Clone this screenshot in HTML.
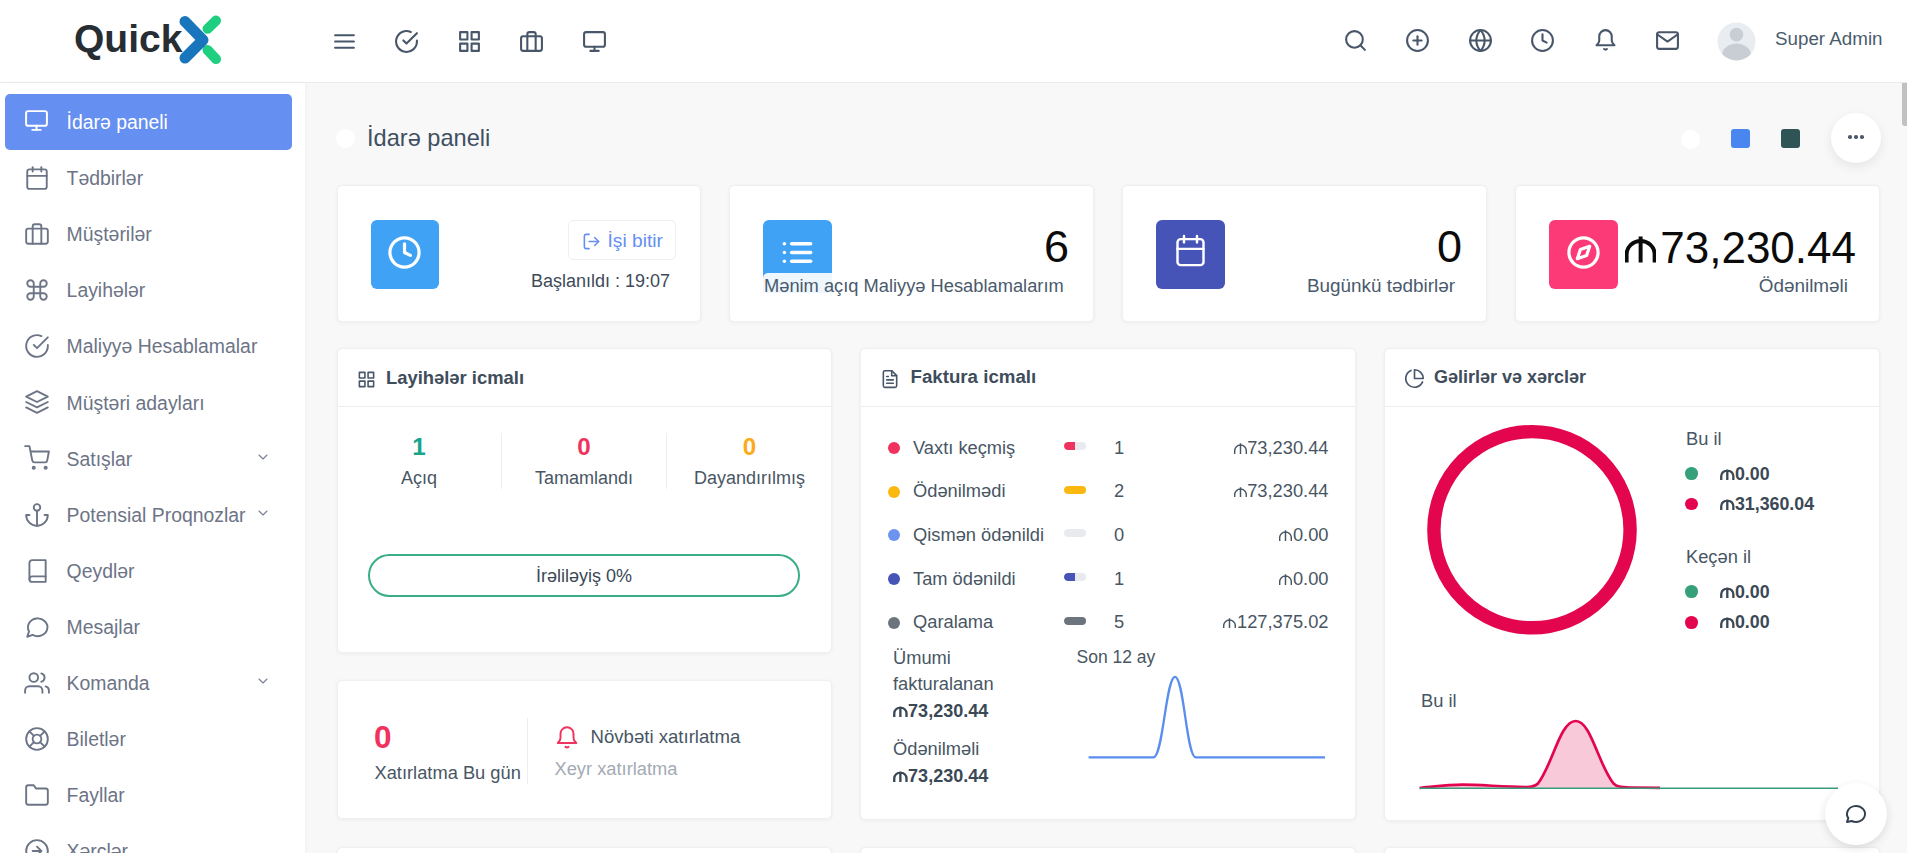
<!DOCTYPE html>
<html><head><meta charset="utf-8">
<style>
*{box-sizing:border-box;margin:0;padding:0}
html,body{width:1907px;height:853px;overflow:hidden;background:#f8f8f8;font-family:"Liberation Sans",sans-serif;}
.abs{position:absolute}
svg{display:block}
svg.mn{display:inline-block;vertical-align:baseline}
.ic{fill:none;stroke:currentColor;stroke-linecap:round;stroke-linejoin:round}
.t{position:absolute;white-space:nowrap}
#header{position:absolute;left:0;top:0;width:1907px;height:83px;background:#fff;border-bottom:1px solid #ebebeb;}
#sidebar{position:absolute;left:0;top:83px;width:305px;height:770px;background:#fff;box-shadow:1px 0 5px rgba(0,0,0,0.035)}
.card{position:absolute;background:#fff;border-radius:5px;box-shadow:0 1px 4px rgba(30,40,60,0.05);border:1px solid #eeeef3}
.hdr{position:absolute;left:0;right:0;top:0;height:58px;border-bottom:1px solid #ededf0}
</style></head><body>
<div id="header"></div>
<div class="t" style="left:74px;top:19px;font-size:39px;line-height:39px;font-weight:bold;color:#262d33">Quick</div>
<svg class="abs" style="left:176px;top:14px" width="48" height="52" viewBox="0 0 48 52">
  <path d="M31.5 14.8 L40 6.6" fill="none" stroke="#1fcf80" stroke-width="10" stroke-linecap="round"/>
  <path d="M31.5 36 L40 45" fill="none" stroke="#1fcf80" stroke-width="10" stroke-linecap="round"/>
  <path d="M9 7.5 L27 26 L9 44" fill="none" stroke="#1976bc" stroke-width="11" stroke-linecap="round" stroke-linejoin="round"/>
</svg>
<svg class="abs ic" style="left:332.0px;top:29px;color:#475669;" width="25" height="25" viewBox="0 0 24 24" stroke-width="2"><line x1="3" y1="6" x2="21" y2="6"/><line x1="3" y1="12" x2="21" y2="12"/><line x1="3" y1="18" x2="21" y2="18"/></svg>
<svg class="abs ic" style="left:393.9px;top:29px;color:#475669;" width="25" height="25" viewBox="0 0 24 24" stroke-width="2"><path d="M22 11.08V12a10 10 0 1 1-5.93-9.14"/><polyline points="22 4 12 14.01 9 11.01"/></svg>
<svg class="abs ic" style="left:457.0px;top:29px;color:#475669;" width="25" height="25" viewBox="0 0 24 24" stroke-width="2"><rect x="3" y="3" width="7" height="7"/><rect x="14" y="3" width="7" height="7"/><rect x="14" y="14" width="7" height="7"/><rect x="3" y="14" width="7" height="7"/></svg>
<svg class="abs ic" style="left:518.9px;top:29px;color:#475669;" width="25" height="25" viewBox="0 0 24 24" stroke-width="2"><rect x="2" y="7" width="20" height="14" rx="2" ry="2"/><path d="M16 21V5a2 2 0 0 0-2-2h-4a2 2 0 0 0-2 2v16"/></svg>
<svg class="abs ic" style="left:582.1px;top:29px;color:#475669;" width="25" height="25" viewBox="0 0 24 24" stroke-width="2"><rect x="2" y="3" width="20" height="14" rx="2" ry="2"/><line x1="8" y1="21" x2="16" y2="21"/><line x1="12" y1="17" x2="12" y2="21"/></svg>
<svg class="abs ic" style="left:1343.0px;top:28px;color:#475669;" width="25" height="25" viewBox="0 0 24 24" stroke-width="2"><circle cx="11" cy="11" r="8"/><line x1="21" y1="21" x2="16.65" y2="16.65"/></svg>
<svg class="abs ic" style="left:1405.1px;top:28px;color:#475669;" width="25" height="25" viewBox="0 0 24 24" stroke-width="2"><circle cx="12" cy="12" r="10"/><line x1="12" y1="8" x2="12" y2="16"/><line x1="8" y1="12" x2="16" y2="12"/></svg>
<svg class="abs ic" style="left:1468.0px;top:28px;color:#475669;" width="25" height="25" viewBox="0 0 24 24" stroke-width="2"><circle cx="12" cy="12" r="10"/><line x1="2" y1="12" x2="22" y2="12"/><path d="M12 2a15.3 15.3 0 0 1 4 10 15.3 15.3 0 0 1-4 10 15.3 15.3 0 0 1-4-10 15.3 15.3 0 0 1 4-10z"/></svg>
<svg class="abs ic" style="left:1530.0px;top:28px;color:#475669;" width="25" height="25" viewBox="0 0 24 24" stroke-width="2"><circle cx="12" cy="12" r="10"/><polyline points="12 6 12 12 16 14"/></svg>
<svg class="abs ic" style="left:1593.0px;top:28px;color:#475669;" width="25" height="25" viewBox="0 0 24 24" stroke-width="2"><path d="M12 2a6 6 0 0 0-6 6v4c0 2-1.2 3.4-2.6 4.6h17.2c-1.4-1.2-2.6-2.6-2.6-4.6V8A6 6 0 0 0 12 2z"/><path d="M10.6 20.2q1.4 1.1 2.8 0"/></svg>
<svg class="abs ic" style="left:1654.8px;top:28px;color:#475669;" width="25" height="25" viewBox="0 0 24 24" stroke-width="2"><path d="M4 4h16c1.1 0 2 .9 2 2v12c0 1.1-.9 2-2 2H4c-1.1 0-2-.9-2-2V6c0-1.1.9-2 2-2z"/><polyline points="22,6 12,13 2,6"/></svg>
<svg class="abs" style="left:1716.5px;top:21.5px" width="39" height="39" viewBox="0 0 39 39">
  <defs><clipPath id="avc"><circle cx="19.5" cy="19.5" r="19"/></clipPath></defs>
  <circle cx="19.5" cy="19.5" r="19" fill="#e9ecf0"/>
  <g clip-path="url(#avc)" fill="#c9ced5"><circle cx="19.5" cy="12.6" r="6.8"/><ellipse cx="19.5" cy="33.5" rx="14.5" ry="12"/></g>
</svg>
<div class="t" style="top:29.69px;font-size:18.8px;line-height:18.8px;color:#4a5b6d;left:1775px;">Super Admin</div>
<div id="sidebar"></div>
<div class="abs" style="left:5px;top:94.0px;width:287px;height:56px;border-radius:5px;background:#658ff0"></div>
<svg class="abs ic" style="left:24.0px;top:108.3px;color:#fff;" width="25" height="25" viewBox="0 0 24 24" stroke-width="1.9"><rect x="2" y="3" width="20" height="14" rx="2" ry="2"/><line x1="8" y1="21" x2="16" y2="21"/><line x1="12" y1="17" x2="12" y2="21"/></svg>
<div class="t" style="top:113.18px;font-size:19.4px;line-height:19.4px;color:#fff;left:66.6px;">İdarə paneli</div>
<svg class="abs ic" style="left:23.5px;top:165.1px;color:#6c7486;" width="26" height="26" viewBox="0 0 24 24" stroke-width="1.75"><rect x="3" y="4" width="18" height="18" rx="2" ry="2"/><line x1="16" y1="2" x2="16" y2="6"/><line x1="8" y1="2" x2="8" y2="6"/><line x1="3" y1="10" x2="21" y2="10"/></svg>
<div class="t" style="top:169.25px;font-size:19.4px;line-height:19.4px;color:#6c7486;left:66.6px;">Tədbirlər</div>
<svg class="abs ic" style="left:23.5px;top:221.1px;color:#6c7486;" width="26" height="26" viewBox="0 0 24 24" stroke-width="1.75"><rect x="2" y="7" width="20" height="14" rx="2" ry="2"/><path d="M16 21V5a2 2 0 0 0-2-2h-4a2 2 0 0 0-2 2v16"/></svg>
<div class="t" style="top:225.32px;font-size:19.4px;line-height:19.4px;color:#6c7486;left:66.6px;">Müştərilər</div>
<svg class="abs ic" style="left:23.5px;top:277.2px;color:#6c7486;" width="26" height="26" viewBox="0 0 24 24" stroke-width="1.75"><path d="M18 3a3 3 0 0 0-3 3v12a3 3 0 0 0 3 3 3 3 0 0 0 3-3 3 3 0 0 0-3-3H6a3 3 0 0 0-3 3 3 3 0 0 0 3 3 3 3 0 0 0 3-3V6a3 3 0 0 0-3-3 3 3 0 0 0-3 3 3 3 0 0 0 3 3h12a3 3 0 0 0 3-3 3 3 0 0 0-3-3z"/></svg>
<div class="t" style="top:281.39px;font-size:19.4px;line-height:19.4px;color:#6c7486;left:66.6px;">Layihələr</div>
<svg class="abs ic" style="left:23.5px;top:333.3px;color:#6c7486;" width="26" height="26" viewBox="0 0 24 24" stroke-width="1.75"><path d="M22 11.08V12a10 10 0 1 1-5.93-9.14"/><polyline points="22 4 12 14.01 9 11.01"/></svg>
<div class="t" style="top:337.46px;font-size:19.4px;line-height:19.4px;color:#6c7486;left:66.6px;">Maliyyə Hesablamalar</div>
<svg class="abs ic" style="left:23.5px;top:389.4px;color:#6c7486;" width="26" height="26" viewBox="0 0 24 24" stroke-width="1.75"><polygon points="12 2 2 7 12 12 22 7 12 2"/><polyline points="2 17 12 22 22 17"/><polyline points="2 12 12 17 22 12"/></svg>
<div class="t" style="top:393.53px;font-size:19.4px;line-height:19.4px;color:#6c7486;left:66.6px;">Müştəri adayları</div>
<svg class="abs ic" style="left:23.5px;top:445.4px;color:#6c7486;" width="26" height="26" viewBox="0 0 24 24" stroke-width="1.75"><circle cx="9" cy="21" r="1"/><circle cx="20" cy="21" r="1"/><path d="M1 1h4l2.68 13.39a2 2 0 0 0 2 1.61h9.72a2 2 0 0 0 2-1.61L23 6H6"/></svg>
<div class="t" style="top:449.60px;font-size:19.4px;line-height:19.4px;color:#6c7486;left:66.6px;">Satışlar</div>
<svg class="abs" style="left:258px;top:453.9px" width="10" height="7" viewBox="0 0 10 7"><polyline points="1 1 5 5 9 1" fill="none" stroke="#7a8192" stroke-width="1.15" stroke-linecap="round" stroke-linejoin="round"/></svg>
<svg class="abs ic" style="left:23.5px;top:501.5px;color:#6c7486;" width="26" height="26" viewBox="0 0 24 24" stroke-width="1.75"><circle cx="12" cy="5" r="3"/><line x1="12" y1="22" x2="12" y2="8"/><path d="M5 12H2a10 10 0 0 0 20 0h-3"/></svg>
<div class="t" style="top:505.67px;font-size:19.4px;line-height:19.4px;color:#6c7486;left:66.6px;">Potensial Proqnozlar</div>
<svg class="abs" style="left:258px;top:510.0px" width="10" height="7" viewBox="0 0 10 7"><polyline points="1 1 5 5 9 1" fill="none" stroke="#7a8192" stroke-width="1.15" stroke-linecap="round" stroke-linejoin="round"/></svg>
<svg class="abs ic" style="left:23.5px;top:557.6px;color:#6c7486;" width="26" height="26" viewBox="0 0 24 24" stroke-width="1.75"><path d="M5 19.5A2.5 2.5 0 0 1 7.5 17H20"/><path d="M7.5 2H20v20H7.5A2.5 2.5 0 0 1 5 19.5v-15A2.5 2.5 0 0 1 7.5 2z"/></svg>
<div class="t" style="top:561.74px;font-size:19.4px;line-height:19.4px;color:#6c7486;left:66.6px;">Qeydlər</div>
<svg class="abs ic" style="left:23.5px;top:613.6px;color:#6c7486;" width="26" height="26" viewBox="0 0 24 24" stroke-width="1.75"><path d="M3 21l1.65-4.95A9 8.2 0 1 1 8 19.3L3 21z"/></svg>
<div class="t" style="top:617.81px;font-size:19.4px;line-height:19.4px;color:#6c7486;left:66.6px;">Mesajlar</div>
<svg class="abs ic" style="left:23.5px;top:669.7px;color:#6c7486;" width="26" height="26" viewBox="0 0 24 24" stroke-width="1.75"><path d="M17 21v-2a4 4 0 0 0-4-4H5a4 4 0 0 0-4 4v2"/><circle cx="9" cy="7" r="4"/><path d="M23 21v-2a4 4 0 0 0-3-3.87"/><path d="M16 3.13a4 4 0 0 1 0 7.75"/></svg>
<div class="t" style="top:673.88px;font-size:19.4px;line-height:19.4px;color:#6c7486;left:66.6px;">Komanda</div>
<svg class="abs" style="left:258px;top:678.2px" width="10" height="7" viewBox="0 0 10 7"><polyline points="1 1 5 5 9 1" fill="none" stroke="#7a8192" stroke-width="1.15" stroke-linecap="round" stroke-linejoin="round"/></svg>
<svg class="abs ic" style="left:23.5px;top:725.8px;color:#6c7486;" width="26" height="26" viewBox="0 0 24 24" stroke-width="1.75"><circle cx="12" cy="12" r="10"/><circle cx="12" cy="12" r="4"/><line x1="4.93" y1="4.93" x2="9.17" y2="9.17"/><line x1="14.83" y1="14.83" x2="19.07" y2="19.07"/><line x1="14.83" y1="9.17" x2="19.07" y2="4.93"/><line x1="4.93" y1="19.07" x2="9.17" y2="14.83"/></svg>
<div class="t" style="top:729.95px;font-size:19.4px;line-height:19.4px;color:#6c7486;left:66.6px;">Biletlər</div>
<svg class="abs ic" style="left:23.5px;top:781.8px;color:#6c7486;" width="26" height="26" viewBox="0 0 24 24" stroke-width="1.75"><path d="M22 19a2 2 0 0 1-2 2H4a2 2 0 0 1-2-2V5a2 2 0 0 1 2-2h5l2 3h9a2 2 0 0 1 2 2z"/></svg>
<div class="t" style="top:786.02px;font-size:19.4px;line-height:19.4px;color:#6c7486;left:66.6px;">Fayllar</div>
<svg class="abs ic" style="left:23.5px;top:837.9px;color:#6c7486;" width="26" height="26" viewBox="0 0 24 24" stroke-width="1.75"><circle cx="12" cy="12" r="10"/><polyline points="12 16 16 12 12 8"/><line x1="8" y1="12" x2="16" y2="12"/></svg>
<div class="t" style="top:842.09px;font-size:19.4px;line-height:19.4px;color:#6c7486;left:66.6px;">Xərclər</div>
<div class="abs" style="left:1902px;top:83px;width:5px;height:43px;background:#c1c1c1;border-radius:0 0 0 3px"></div>
<div class="abs" style="left:336px;top:129px;width:19px;height:19px;border-radius:50%;background:#fff"></div>
<div class="t" style="top:127.12px;font-size:23.6px;line-height:23.6px;color:#3f4f62;left:367px;">İdarə paneli</div>
<div class="abs" style="left:1681px;top:129.5px;width:19px;height:19px;border-radius:50%;background:#fff"></div>
<div class="abs" style="left:1731px;top:129px;width:19px;height:19px;border-radius:3px;background:#4a86f0"></div>
<div class="abs" style="left:1781px;top:129px;width:19px;height:19px;border-radius:3px;background:#2f5456"></div>
<div class="abs" style="left:1831px;top:113px;width:50px;height:50px;border-radius:50%;background:#fff;box-shadow:0 4px 12px rgba(0,0,0,0.08)"></div>
<div class="abs" style="left:1848.2px;top:135.2px;width:3.6px;height:3.6px;border-radius:50%;background:#4a5a6c"></div>
<div class="abs" style="left:1854.2px;top:135.2px;width:3.6px;height:3.6px;border-radius:50%;background:#4a5a6c"></div>
<div class="abs" style="left:1860.2px;top:135.2px;width:3.6px;height:3.6px;border-radius:50%;background:#4a5a6c"></div>
<div class="card" style="left:336.50px;top:185.2px;width:364.875px;height:136.6px"></div>
<div class="card" style="left:729.38px;top:185.2px;width:364.875px;height:136.6px"></div>
<div class="card" style="left:1122.25px;top:185.2px;width:364.875px;height:136.6px"></div>
<div class="card" style="left:1515.12px;top:185.2px;width:364.875px;height:136.6px"></div>
<div class="abs" style="left:371px;top:220px;width:68px;height:69px;border-radius:6px;background:#3fa2f5"></div>
<svg class="abs ic" style="left:387px;top:235px;color:#fff;" width="35" height="35" viewBox="0 0 24 24" stroke-width="2.2"><circle cx="12" cy="12" r="10"/><polyline points="12 6 12 12 16 14"/></svg>
<div class="abs" style="left:568px;top:219.8px;width:108px;height:40.5px;border-radius:5px;border:1px solid #eeeff3;background:#fff"></div>
<svg class="abs ic" style="left:582px;top:232px;color:#658ff0;" width="19" height="19" viewBox="0 0 24 24" stroke-width="2"><path d="M9 21H5a2 2 0 0 1-2-2V5a2 2 0 0 1 2-2h4"/><polyline points="16 17 21 12 16 7"/><line x1="21" y1="12" x2="9" y2="12"/></svg>
<div class="t" style="top:230.65px;font-size:19.2px;line-height:19.2px;color:#658ff0;left:607.5px;">İşi bitir</div>
<div class="t" style="top:271.76px;font-size:18px;line-height:18px;color:#3d4a5a;right:1237px;text-align:right;">Başlanıldı : 19:07</div>
<div class="abs" style="left:763px;top:220px;width:69px;height:69px;border-radius:6px;background:#3fa2f5"></div>
<div class="abs" style="left:763px;top:273px;width:69px;height:20px;border-radius:5px 0 0 0;background:#eef6fe"></div>
<svg class="abs ic" style="left:780px;top:235px;color:#fff;" width="35" height="35" viewBox="0 0 24 24" stroke-width="2.4"><line x1="8" y1="6" x2="21" y2="6"/><line x1="8" y1="12" x2="21" y2="12"/><line x1="8" y1="18" x2="21" y2="18"/><line x1="3" y1="6" x2="3.01" y2="6"/><line x1="3" y1="12" x2="3.01" y2="12"/><line x1="3" y1="18" x2="3.01" y2="18"/></svg>
<div class="t" style="top:224.11px;font-size:45px;line-height:45px;color:#0b0b0b;right:838px;text-align:right;">6</div>
<div class="t" style="top:276.81px;font-size:18.3px;line-height:18.3px;color:#4a5a6c;left:764px;">Mənim açıq Maliyyə Hesablamalarım</div>
<div class="abs" style="left:1156px;top:220px;width:69px;height:69px;border-radius:6px;background:#4654b8"></div>
<svg class="abs ic" style="left:1171px;top:231.3px;color:#fff;" width="39" height="39" viewBox="0 0 24 24" stroke-width="1.5"><path d="M4 7a2 2 0 0 1 2 -2h12a2 2 0 0 1 2 2v12a2 2 0 0 1 -2 2h-12a2 2 0 0 1 -2 -2v-12z"/><path d="M16 3v4"/><path d="M8 3v4"/><path d="M4 11h16"/></svg>
<div class="t" style="top:224.11px;font-size:45px;line-height:45px;color:#0b0b0b;right:445px;text-align:right;">0</div>
<div class="t" style="top:276.50px;font-size:18.9px;line-height:18.9px;color:#4a5a6c;right:452px;text-align:right;">Bugünkü tədbirlər</div>
<div class="abs" style="left:1549px;top:220px;width:69px;height:69px;border-radius:6px;background:#fd3a78"></div>
<svg class="abs ic" style="left:1566px;top:235px;color:#fff;" width="35" height="35" viewBox="0 0 24 24" stroke-width="2.2"><circle cx="12" cy="12" r="10"/><polygon points="16.24 7.76 14.12 14.12 7.76 16.24 9.88 9.88 16.24 7.76"/></svg>
<div class="t" style="top:225.55px;font-size:44px;line-height:44px;color:#0b0b0b;right:51px;text-align:right;"><svg class="mn" style="width:31.24px;height:26.40px;margin-right:3.96px" viewBox="0 0 71 60"><path d="M3.65 60V42A31.85 30.85 0 0 1 67.35 42V60M35.5 1V60" fill="none" stroke="currentColor" stroke-width="9"/></svg>73,230.44</div>
<div class="t" style="top:276.50px;font-size:18.9px;line-height:18.9px;color:#4a5a6c;right:59px;text-align:right;">Ödənilməli</div>
<div class="card" style="left:336.50px;top:348px;width:495.83px;height:305px"><div class="hdr"></div></div>
<svg class="abs ic" style="left:357px;top:369.5px;color:#475669;" width="19" height="19" viewBox="0 0 24 24" stroke-width="2"><rect x="3" y="3" width="7" height="7"/><rect x="14" y="3" width="7" height="7"/><rect x="14" y="14" width="7" height="7"/><rect x="3" y="14" width="7" height="7"/></svg>
<div class="t" style="top:368.72px;font-size:18.4px;line-height:18.4px;color:#3e4c5b;font-weight:bold;left:386px;">Layihələr icmalı</div>
<div class="abs" style="left:501px;top:433px;width:1px;height:56px;background:#eceef1"></div>
<div class="abs" style="left:666px;top:433px;width:1px;height:56px;background:#eceef1"></div>
<div class="t" style="top:434.71px;font-size:24.2px;line-height:24.2px;color:#19a58b;font-weight:bold;left:19px;width:800px;text-align:center;">1</div>
<div class="t" style="top:468.76px;font-size:18px;line-height:18px;color:#485664;left:19px;width:800px;text-align:center;">Açıq</div>
<div class="t" style="top:434.71px;font-size:24.2px;line-height:24.2px;color:#f0325e;font-weight:bold;left:184px;width:800px;text-align:center;">0</div>
<div class="t" style="top:468.76px;font-size:18px;line-height:18px;color:#485664;left:184px;width:800px;text-align:center;">Tamamlandı</div>
<div class="t" style="top:434.71px;font-size:24.2px;line-height:24.2px;color:#fbaa1a;font-weight:bold;left:349.5px;width:800px;text-align:center;">0</div>
<div class="t" style="top:468.76px;font-size:18px;line-height:18px;color:#485664;left:349.5px;width:800px;text-align:center;">Dayandırılmış</div>
<div class="abs" style="left:368px;top:554px;width:432px;height:43px;border-radius:22px;border:2px solid #3aae86"></div>
<div class="t" style="top:566.76px;font-size:18px;line-height:18px;color:#3b4856;left:184px;width:800px;text-align:center;">İrəliləyiş 0%</div>
<div class="card" style="left:336.50px;top:680px;width:495.83px;height:139px"></div>
<div class="t" style="top:721.64px;font-size:31.5px;line-height:31.5px;color:#f0325e;font-weight:bold;left:374px;">0</div>
<div class="t" style="top:764.11px;font-size:18.3px;line-height:18.3px;color:#485664;left:374.5px;">Xatırlatma Bu gün</div>
<div class="abs" style="left:527px;top:718px;width:1px;height:66px;background:#eceef1"></div>
<svg class="abs ic" style="left:554px;top:724.5px;color:#f0325e;" width="26" height="26" viewBox="0 0 24 24" stroke-width="1.8"><path d="M12 2a6 6 0 0 0-6 6v4c0 2-1.2 3.4-2.6 4.6h17.2c-1.4-1.2-2.6-2.6-2.6-4.6V8A6 6 0 0 0 12 2z"/><path d="M10.6 20.2q1.4 1.1 2.8 0"/></svg>
<div class="t" style="top:728.46px;font-size:18.6px;line-height:18.6px;color:#485664;left:590.5px;">Növbəti xatırlatma</div>
<div class="t" style="top:759.71px;font-size:18.3px;line-height:18.3px;color:#a3aab4;left:554.5px;">Xeyr xatırlatma</div>
<div class="card" style="left:860.33px;top:348px;width:495.83px;height:472px"><div class="hdr"></div></div>
<svg class="abs ic" style="left:879.5px;top:368.5px;color:#475669;" width="20" height="20" viewBox="0 0 24 24" stroke-width="1.9"><path d="M14 2H6a2 2 0 0 0-2 2v16a2 2 0 0 0 2 2h12a2 2 0 0 0 2-2V8z"/><polyline points="14 2 14 8 20 8"/><line x1="16" y1="13" x2="8" y2="13"/><line x1="16" y1="17" x2="8" y2="17"/><polyline points="10 9 9 9 8 9"/></svg>
<div class="t" style="top:368.17px;font-size:18.7px;line-height:18.7px;color:#3e4c5b;font-weight:bold;left:910.5px;">Faktura icmalı</div>
<div class="abs" style="left:888px;top:442.0px;width:12px;height:12px;border-radius:50%;background:#f0325e"></div>
<div class="t" style="top:438.81px;font-size:18.3px;line-height:18.3px;color:#485664;left:913px;">Vaxtı keçmiş</div>
<div class="abs" style="left:1064px;top:442.0px;width:22px;height:8px;border-radius:4px;background:#e8eaee;overflow:hidden"><div style="width:50%;height:100%;background:#f0325e;border-radius:4px 0 0 4px"></div></div>
<div class="t" style="top:438.81px;font-size:18.3px;line-height:18.3px;color:#485664;left:719px;width:800px;text-align:center;">1</div>
<div class="t" style="top:438.81px;font-size:18.3px;line-height:18.3px;color:#485664;right:578.5px;text-align:right;"><svg class="mn" style="width:12.99px;height:10.98px;margin-right:0.55px" viewBox="0 0 71 60"><path d="M3.65 60V42A31.85 30.85 0 0 1 67.35 42V60M35.5 1V60" fill="none" stroke="currentColor" stroke-width="8"/></svg>73,230.44</div>
<div class="abs" style="left:888px;top:485.7px;width:12px;height:12px;border-radius:50%;background:#fbb80f"></div>
<div class="t" style="top:482.48px;font-size:18.3px;line-height:18.3px;color:#485664;left:913px;">Ödənilmədi</div>
<div class="abs" style="left:1064px;top:485.7px;width:22px;height:8px;border-radius:4px;background:#e8eaee;overflow:hidden"><div style="width:100%;height:100%;background:#fbb80f;border-radius:4px 0 0 4px"></div></div>
<div class="t" style="top:482.48px;font-size:18.3px;line-height:18.3px;color:#485664;left:719px;width:800px;text-align:center;">2</div>
<div class="t" style="top:482.48px;font-size:18.3px;line-height:18.3px;color:#485664;right:578.5px;text-align:right;"><svg class="mn" style="width:12.99px;height:10.98px;margin-right:0.55px" viewBox="0 0 71 60"><path d="M3.65 60V42A31.85 30.85 0 0 1 67.35 42V60M35.5 1V60" fill="none" stroke="currentColor" stroke-width="8"/></svg>73,230.44</div>
<div class="abs" style="left:888px;top:529.3px;width:12px;height:12px;border-radius:50%;background:#6c93f0"></div>
<div class="t" style="top:526.15px;font-size:18.3px;line-height:18.3px;color:#485664;left:913px;">Qismən ödənildi</div>
<div class="abs" style="left:1064px;top:529.3px;width:22px;height:8px;border-radius:4px;background:#e8eaee;overflow:hidden"><div style="width:0%;height:100%;background:#6c93f0;border-radius:4px 0 0 4px"></div></div>
<div class="t" style="top:526.15px;font-size:18.3px;line-height:18.3px;color:#485664;left:719px;width:800px;text-align:center;">0</div>
<div class="t" style="top:526.15px;font-size:18.3px;line-height:18.3px;color:#485664;right:578.5px;text-align:right;"><svg class="mn" style="width:12.99px;height:10.98px;margin-right:0.55px" viewBox="0 0 71 60"><path d="M3.65 60V42A31.85 30.85 0 0 1 67.35 42V60M35.5 1V60" fill="none" stroke="currentColor" stroke-width="8"/></svg>0.00</div>
<div class="abs" style="left:888px;top:573.0px;width:12px;height:12px;border-radius:50%;background:#4654b8"></div>
<div class="t" style="top:569.82px;font-size:18.3px;line-height:18.3px;color:#485664;left:913px;">Tam ödənildi</div>
<div class="abs" style="left:1064px;top:573.0px;width:22px;height:8px;border-radius:4px;background:#e8eaee;overflow:hidden"><div style="width:50%;height:100%;background:#4654b8;border-radius:4px 0 0 4px"></div></div>
<div class="t" style="top:569.82px;font-size:18.3px;line-height:18.3px;color:#485664;left:719px;width:800px;text-align:center;">1</div>
<div class="t" style="top:569.82px;font-size:18.3px;line-height:18.3px;color:#485664;right:578.5px;text-align:right;"><svg class="mn" style="width:12.99px;height:10.98px;margin-right:0.55px" viewBox="0 0 71 60"><path d="M3.65 60V42A31.85 30.85 0 0 1 67.35 42V60M35.5 1V60" fill="none" stroke="currentColor" stroke-width="8"/></svg>0.00</div>
<div class="abs" style="left:888px;top:616.7px;width:12px;height:12px;border-radius:50%;background:#6c757d"></div>
<div class="t" style="top:613.49px;font-size:18.3px;line-height:18.3px;color:#485664;left:913px;">Qaralama</div>
<div class="abs" style="left:1064px;top:616.7px;width:22px;height:8px;border-radius:4px;background:#e8eaee;overflow:hidden"><div style="width:100%;height:100%;background:#6c757d;border-radius:4px 0 0 4px"></div></div>
<div class="t" style="top:613.49px;font-size:18.3px;line-height:18.3px;color:#485664;left:719px;width:800px;text-align:center;">5</div>
<div class="t" style="top:613.49px;font-size:18.3px;line-height:18.3px;color:#485664;right:578.5px;text-align:right;"><svg class="mn" style="width:12.99px;height:10.98px;margin-right:0.55px" viewBox="0 0 71 60"><path d="M3.65 60V42A31.85 30.85 0 0 1 67.35 42V60M35.5 1V60" fill="none" stroke="currentColor" stroke-width="8"/></svg>127,375.02</div>
<div class="t" style="top:648.81px;font-size:18.3px;line-height:18.3px;color:#485664;left:893px;">Ümumi</div>
<div class="t" style="top:674.91px;font-size:18.3px;line-height:18.3px;color:#485664;left:893px;">fakturalanan</div>
<div class="t" style="top:702.46px;font-size:18px;line-height:18px;color:#3b4856;font-weight:bold;left:893px;"><svg class="mn" style="width:14.76px;height:11.16px;margin-right:0.36px" viewBox="0 0 82 62"><path d="M7 62V40A34 31 0 0 1 75 40V62M41 3V62" fill="none" stroke="currentColor" stroke-width="13"/></svg>73,230.44</div>
<div class="t" style="top:739.51px;font-size:18.3px;line-height:18.3px;color:#485664;left:893px;">Ödənilməli</div>
<div class="t" style="top:767.06px;font-size:18px;line-height:18px;color:#3b4856;font-weight:bold;left:893px;"><svg class="mn" style="width:14.76px;height:11.16px;margin-right:0.36px" viewBox="0 0 82 62"><path d="M7 62V40A34 31 0 0 1 75 40V62M41 3V62" fill="none" stroke="currentColor" stroke-width="13"/></svg>73,230.44</div>
<div class="t" style="top:649.49px;font-size:17.5px;line-height:17.5px;color:#485664;left:1076.5px;">Son 12 ay</div>
<svg class="abs" style="left:1080px;top:670px" width="250" height="95" viewBox="1080 670 250 95">
<path d="M1088.6 757.4 L1153.4 757.4 C1163 757.4 1166 676.8 1175 676.8 C1184 676.8 1186.5 757.4 1195.8 757.4 L1325 757.4" fill="none" stroke="#5b8def" stroke-width="2.3" stroke-linejoin="round"/>
</svg>
<div class="card" style="left:1384.17px;top:348px;width:495.83px;height:473px"><div class="hdr"></div></div>
<svg class="abs ic" style="left:1403.5px;top:367.5px;color:#475669;" width="21" height="21" viewBox="0 0 24 24" stroke-width="1.9"><path d="M21.21 15.89A10 10 0 1 1 8 2.83"/><path d="M22 12A10 10 0 0 0 12 2v10z"/></svg>
<div class="t" style="top:368.36px;font-size:18px;line-height:18px;color:#3e4c5b;font-weight:bold;left:1434px;">Gəlirlər və xərclər</div>
<svg class="abs" style="left:1420px;top:418px" width="224" height="224" viewBox="0 0 224 224"><circle cx="112" cy="111.7" r="98.1" fill="none" stroke="#e3064f" stroke-width="13.4"/></svg>
<div class="t" style="top:430.01px;font-size:18.3px;line-height:18.3px;color:#485664;left:1686px;">Bu il</div>
<div class="abs" style="left:1685.2px;top:467.4px;width:12.6px;height:12.6px;border-radius:50%;background:#35a07a"></div>
<div class="t" style="top:465.83px;font-size:17.8px;line-height:17.8px;color:#3b4856;font-weight:bold;left:1720px;"><svg class="mn" style="width:14.60px;height:11.04px;margin-right:0.36px" viewBox="0 0 82 62"><path d="M7 62V40A34 31 0 0 1 75 40V62M41 3V62" fill="none" stroke="currentColor" stroke-width="13"/></svg>0.00</div>
<div class="abs" style="left:1685.2px;top:497.9px;width:12.6px;height:12.6px;border-radius:50%;background:#e3064f"></div>
<div class="t" style="top:496.33px;font-size:17.8px;line-height:17.8px;color:#3b4856;font-weight:bold;left:1720px;"><svg class="mn" style="width:14.60px;height:11.04px;margin-right:0.36px" viewBox="0 0 82 62"><path d="M7 62V40A34 31 0 0 1 75 40V62M41 3V62" fill="none" stroke="currentColor" stroke-width="13"/></svg>31,360.04</div>
<div class="abs" style="left:1685.2px;top:585.2px;width:12.6px;height:12.6px;border-radius:50%;background:#35a07a"></div>
<div class="t" style="top:583.63px;font-size:17.8px;line-height:17.8px;color:#3b4856;font-weight:bold;left:1720px;"><svg class="mn" style="width:14.60px;height:11.04px;margin-right:0.36px" viewBox="0 0 82 62"><path d="M7 62V40A34 31 0 0 1 75 40V62M41 3V62" fill="none" stroke="currentColor" stroke-width="13"/></svg>0.00</div>
<div class="abs" style="left:1685.2px;top:616.0px;width:12.6px;height:12.6px;border-radius:50%;background:#e3064f"></div>
<div class="t" style="top:614.43px;font-size:17.8px;line-height:17.8px;color:#3b4856;font-weight:bold;left:1720px;"><svg class="mn" style="width:14.60px;height:11.04px;margin-right:0.36px" viewBox="0 0 82 62"><path d="M7 62V40A34 31 0 0 1 75 40V62M41 3V62" fill="none" stroke="currentColor" stroke-width="13"/></svg>0.00</div>
<div class="t" style="top:547.71px;font-size:18.3px;line-height:18.3px;color:#485664;left:1686px;">Keçən il</div>
<div class="t" style="top:692.31px;font-size:18.3px;line-height:18.3px;color:#485664;left:1421px;">Bu il</div>
<svg class="abs" style="left:1410px;top:700px" width="440" height="100" viewBox="1410 700 440 100">
<path d="M1419.6 788 C1440 786 1450 784.7 1462.4 784.7 C1480 784.7 1500 786.5 1525 787 C1532 787.2 1535 786.5 1538 783.5 C1553 764 1560 721 1575.8 721 C1591 721 1598 764 1613.5 783.5 C1616.5 786.5 1620 787.2 1630 787.5 L1650 787.9 L1650 788 Z" fill="#f8c9d8" stroke="none"/>
<path d="M1419.6 788 C1440 786 1450 784.7 1462.4 784.7 C1480 784.7 1500 786.5 1525 787 C1532 787.2 1535 786.5 1538 783.5 C1553 764 1560 721 1575.8 721 C1591 721 1598 764 1613.5 783.5 C1616.5 786.5 1620 787.2 1630 787.5 L1660 787.9" fill="none" stroke="#e3064f" stroke-width="2.7"/>
<line x1="1419.6" y1="788.2" x2="1838" y2="788.2" stroke="#3a9b7a" stroke-width="1.5"/>
</svg>
<div class="card" style="left:336.50px;top:847px;width:495.83px;height:40px"></div>
<div class="card" style="left:860.33px;top:847px;width:495.83px;height:40px"></div>
<div class="card" style="left:1384.17px;top:847px;width:495.83px;height:40px"></div>
<div class="abs" style="left:1825px;top:782.5px;width:62px;height:62px;border-radius:50%;background:#fff;box-shadow:0 3px 10px rgba(0,0,0,0.12)"></div>
<svg class="abs ic" style="left:1844px;top:801.5px;color:#344050;" width="24" height="24" viewBox="0 0 24 24" stroke-width="2"><path d="M3 20l1.3 -3.9a9 8 0 1 1 3.4 2.9l-4.7 1"/></svg>
</body></html>
